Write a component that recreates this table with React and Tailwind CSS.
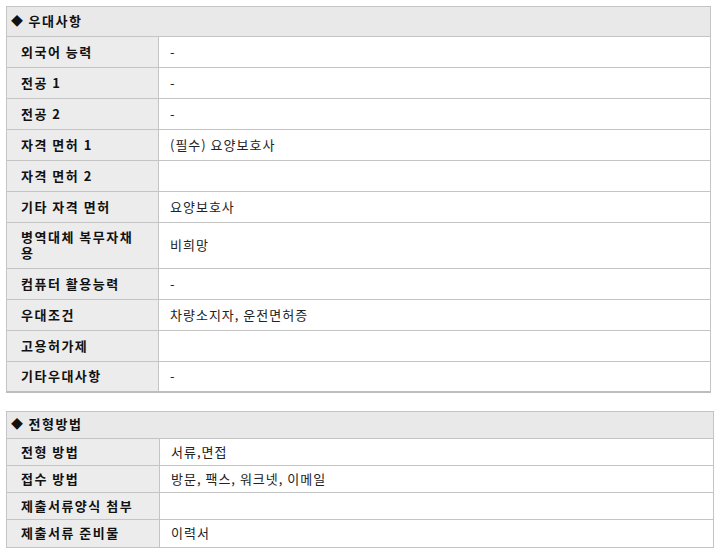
import React from "react";

const font = { fontFamily: '"Noto Sans CJK KR", "Noto Sans", sans-serif' };

const rows1 = [
  ["외국어 능력", "-"],
  ["전공 1", "-"],
  ["전공 2", "-"],
  ["자격 면허 1", "(필수) 요양보호사"],
  ["자격 면허 2", ""],
  ["기타 자격 면허", "요양보호사"],
  ["병역대체 복무자채용", "비희망", true],
  ["컴퓨터 활용능력", "-"],
  ["우대조건", "차량소지자, 운전면허증"],
  ["고용허가제", ""],
  ["기타우대사항", "-"],
];

const rows2 = [
  ["전형 방법", "서류,면접"],
  ["접수 방법", "방문, 팩스, 워크넷, 이메일"],
  ["제출서류양식 첨부", ""],
  ["제출서류 준비물", "이력서"],
];

export default function App() {
  return (
    <div className="w-[720px] h-[555px] bg-white text-[13px] text-[#111]" style={font}>
      <div className="pt-[6px] pl-[6px]">
        <div className="w-[705px] border border-[#c4c4c4] border-b-2 border-b-[#bdbdbd]">
          <div className="h-[30px] bg-[#e9e9e9] border-b border-[#c4c4c4] flex items-center pl-[4px] pb-[1px] font-bold tracking-[1.5px]">
            <span className="text-[12px] mr-[4px]">◆</span>
            <span>우대사항</span>
          </div>
          {rows1.map(([k, v, tall], i) => (
            <div
              key={k}
              className={`grid grid-cols-[152px_1fr] ${tall ? "h-[46px]" : i === rows1.length - 1 ? "h-[29px]" : "h-[31px]"} ${i < rows1.length - 1 ? "border-b border-[#c4c4c4]" : ""}`}
            >
              <div className="bg-[#ececec] border-r border-[#c4c4c4] pl-[14px] pr-[14px] pb-[1px] font-bold flex items-center leading-[16px] tracking-[1.5px]">
                <span>{k}</span>
              </div>
              <div className="bg-white pl-[11px] pb-[1px] flex items-center text-[#222] tracking-[1px]">{v}</div>
            </div>
          ))}
        </div>

        <div className="mt-[18px] w-[708px] border border-[#c4c4c4]">
          <div className="h-[27px] bg-[#e9e9e9] border-b border-[#c4c4c4] flex items-center pl-[4px] pb-[2px] font-bold tracking-[1.5px]">
            <span className="text-[12px] mr-[4px]">◆</span>
            <span>전형방법</span>
          </div>
          {rows2.map(([k, v], i) => (
            <div
              key={k}
              className={`grid grid-cols-[153px_1fr] h-[27px] ${i < rows2.length - 1 ? "border-b border-[#c4c4c4]" : ""}`}
            >
              <div className="bg-[#ececec] border-r border-[#c4c4c4] pl-[14px] pb-[1px] font-bold flex items-center tracking-[1.5px]">{k}</div>
              <div className="bg-white pl-[11px] pb-[1px] flex items-center text-[#222] tracking-[1px]">{v}</div>
            </div>
          ))}
        </div>
      </div>
    </div>
  );
}
